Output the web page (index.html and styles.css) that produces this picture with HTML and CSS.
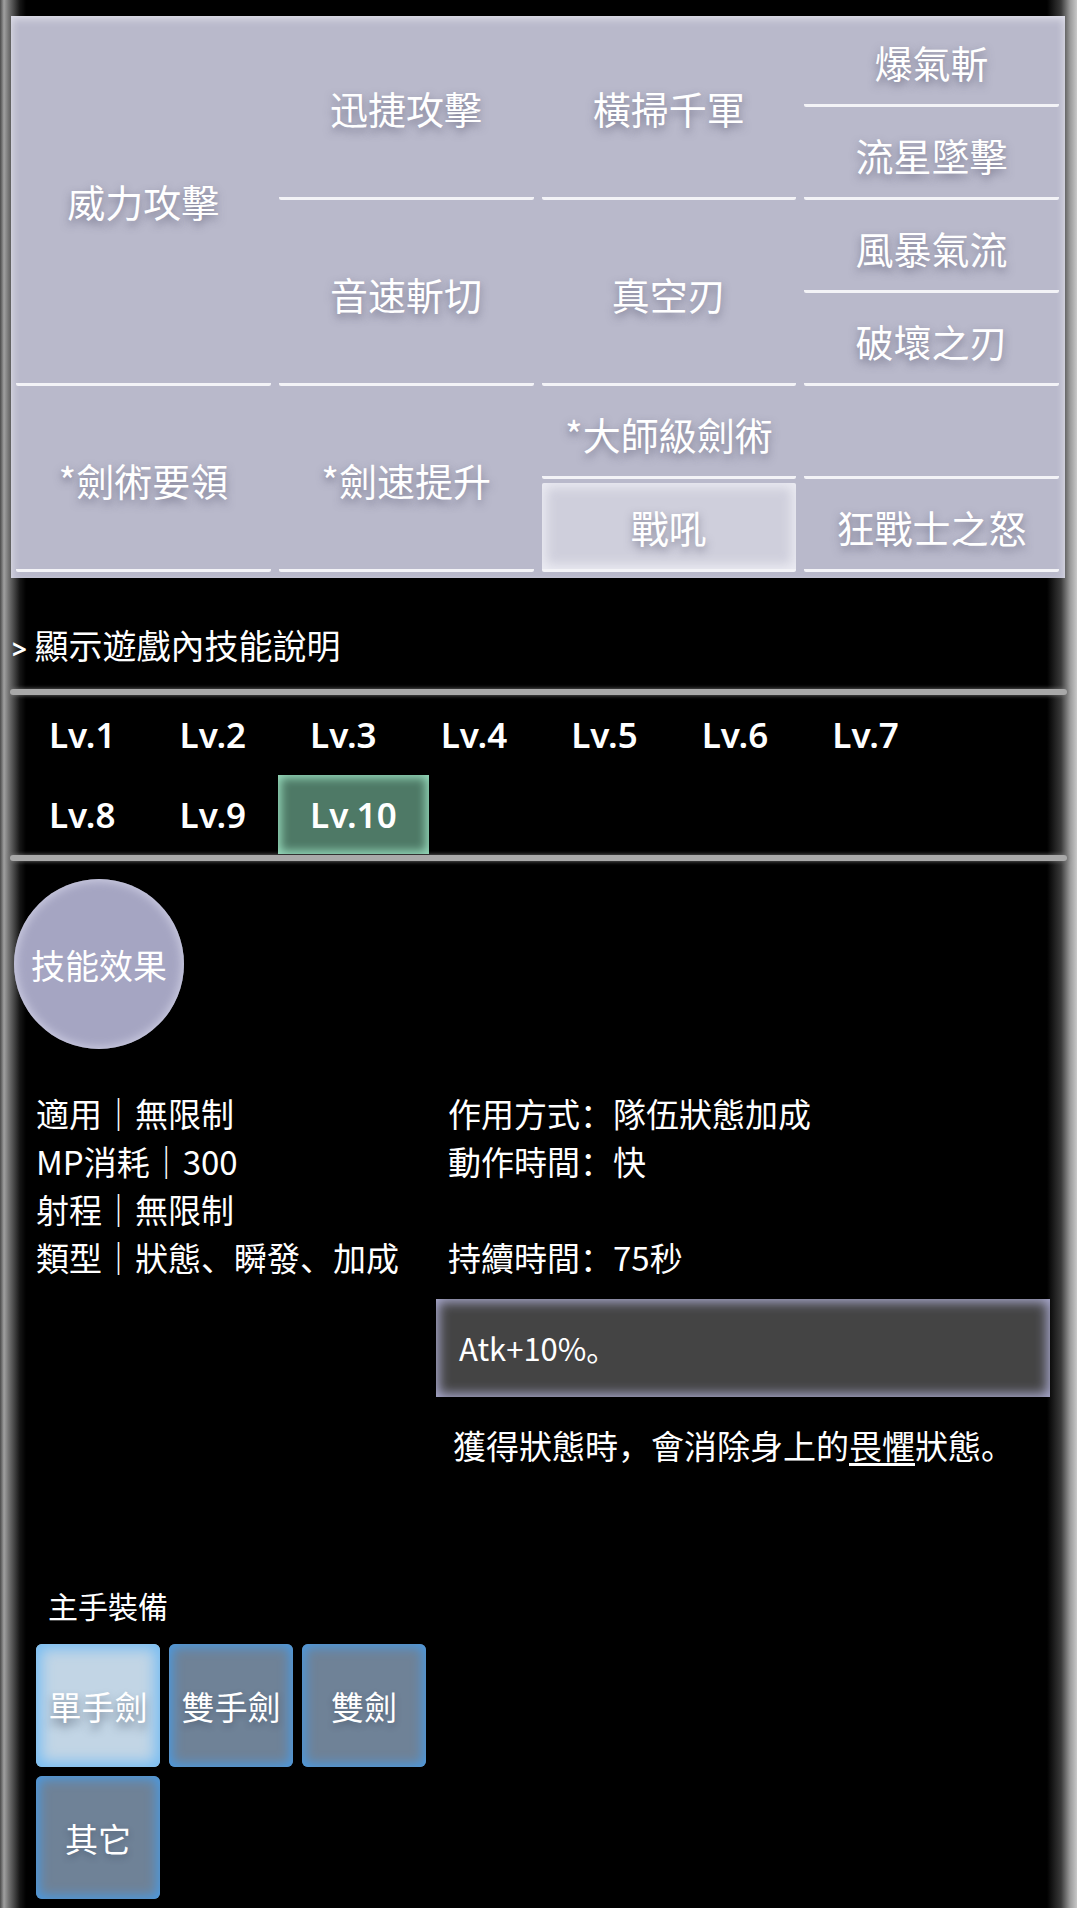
FILE: index.html
```html
<!DOCTYPE html>
<html lang="zh">
<head>
    <meta charset="UTF-8">
    <meta name="viewport" content="width=device-width, initial-scale=1.0">
    <title>戰吼</title>
    <link rel="stylesheet" href="styles.css">
</head>
<body>
    <div class="page">
        <!-- 技能樹 -->
        <div class="skill-tree">
            <div class="cell col1 rows-1-4">威力攻擊</div>
            <div class="cell col2 rows-1-2">迅捷攻擊</div>
            <div class="cell col3 rows-1-2">橫掃千軍</div>
            <div class="cell col4 row1">爆氣斬</div>
            <div class="cell col4 row2">流星墜擊</div>
            <div class="cell col2 rows-3-4">音速斬切</div>
            <div class="cell col3 rows-3-4">真空刃</div>
            <div class="cell col4 row3">風暴氣流</div>
            <div class="cell col4 row4">破壞之刃</div>
            <div class="cell col1 rows-5-6">*劍術要領</div>
            <div class="cell col2 rows-5-6">*劍速提升</div>
            <div class="cell col3 row5">*大師級劍術</div>
            <div class="cell col4 row5"></div>
            <div class="cell col3 row6 active">戰吼</div>
            <div class="cell col4 row6">狂戰士之怒</div>
        </div>

        <div class="toggle"><span class="caret">&gt;</span> 顯示遊戲內技能說明</div>

        <div class="divider"></div>

        <div class="levels">
            <span class="lv">Lv.1</span><span class="lv">Lv.2</span><span class="lv">Lv.3</span><span class="lv">Lv.4</span><span class="lv">Lv.5</span><span class="lv">Lv.6</span><span class="lv">Lv.7</span>
            <br>
            <span class="lv">Lv.8</span><span class="lv">Lv.9</span><span class="lv selected">Lv.10</span>
        </div>

        <div class="divider"></div>

        <div class="badge">技能效果</div>

        <div class="stats">
            <div class="stats-left">
                <p>適用｜無限制</p>
                <p>MP消耗｜300</p>
                <p>射程｜無限制</p>
                <p>類型｜狀態、瞬發、加成</p>
            </div>
            <div class="stats-right">
                <p>作用方式：隊伍狀態加成</p>
                <p>動作時間：快</p>
                <p>&nbsp;</p>
                <p>持續時間：75秒</p>
                <div class="effect-box">Atk+10%。</div>
                <p class="note">獲得狀態時，會消除身上的<u>畏懼</u>狀態。</p>
            </div>
        </div>

        <div class="equip">
            <div class="equip-title">主手裝備</div>
            <div class="equip-list">
                <div class="weapon selected">單手劍</div>
                <div class="weapon">雙手劍</div>
                <div class="weapon">雙劍</div>
                <div class="weapon">其它</div>
            </div>
        </div>
    </div>
</body>
</html>
```

FILE: styles.css
```css
body {
    margin: 0;
    background-color: #fff;
    font-family: "Noto Sans CJK SC", "Noto Sans", sans-serif;
    color: #fff;
}

p {
    margin: 0;
}

.page {
    width: 1077px;
    padding: 16px 0 9px 0;
    box-sizing: border-box;
    background: linear-gradient(to right, #4a4a4a 0, #a0a0a0 4px, #707070 9px, #151515 20px, #000 26px,
        #000 calc(100% - 30px), #3a3a3a calc(100% - 16px), #9a9a9a calc(100% - 7px), #c8c8c8 100%);
}

/* 技能樹 */
.skill-tree {
    margin: 0 12px 0 11px;
    padding: 2px 6px 6px 5px;
    background-color: #b9b9cb;
    box-shadow: inset 0 6px 10px -4px #e4e4ee, inset 6px 0 10px -6px #dedee8, inset -6px 0 10px -6px #dedee8;
    display: grid;
    grid-template-columns: repeat(4, 1fr);
    grid-template-rows: repeat(6, 89px);
    column-gap: 8px;
    row-gap: 4px;
}

.cell {
    display: flex;
    align-items: center;
    justify-content: center;
    border-bottom: 3px solid #f3f3f7;
    border-radius: 2px;
    font-size: 38px;
    text-shadow: 0 4px 8px rgba(70, 70, 95, 0.55);
}

.col1 { grid-column: 1; }
.col2 { grid-column: 2; }
.col3 { grid-column: 3; }
.col4 { grid-column: 4; }
.row1 { grid-row: 1; }
.row2 { grid-row: 2; }
.row3 { grid-row: 3; }
.row4 { grid-row: 4; }
.row5 { grid-row: 5; }
.row6 { grid-row: 6; }
.rows-1-2 { grid-row: 1 / 3; }
.rows-3-4 { grid-row: 3 / 5; }
.rows-1-4 { grid-row: 1 / 5; }
.rows-5-6 { grid-row: 5 / 7; }

.cell.active {
    background-color: #cfcfdc;
    box-shadow: inset 0 0 12px 4px #ececf3;
}

.toggle {
    padding: 43px 0 16px 12px;
    font-size: 34px;
    line-height: 48px;
}

.caret {
    font-family: "Noto Sans", sans-serif;
    font-weight: bold;
    font-size: 26px;
}

.divider {
    height: 6px;
    margin: 0 10px;
    border-radius: 3px;
    background-color: #a9a9a9;
    box-shadow: 0 0 4px #777;
}

/* 等級 */
.levels {
    padding-left: 17px;
}

.lv {
    display: inline-block;
    padding: 0 32px;
    height: 80px;
    line-height: 80px;
    font-family: "Noto Sans", sans-serif;
    font-weight: 600;
    font-size: 35px;
}

.lv.selected {
    height: 79px;
    background-color: #4e7966;
    box-shadow: inset 0 0 10px 3px #96dabb;
}

/* 技能效果 */
.badge {
    width: 170px;
    height: 170px;
    margin: 18px 0 0 14px;
    border-radius: 50%;
    background-color: #a5a5c2;
    box-shadow: inset 0 0 10px 2px #cdcde2;
    display: flex;
    align-items: center;
    justify-content: center;
    font-size: 34px;
}

.stats {
    display: grid;
    grid-template-columns: 400px 614px;
    margin: 40px 0 0 36px;
    font-size: 33px;
    line-height: 48px;
}

.stats-right p {
    padding-left: 12px;
}

.effect-box {
    margin-top: 18px;
    height: 98px;
    padding-left: 23px;
    display: flex;
    align-items: center;
    background-color: #444;
    box-shadow: inset 0 0 12px 3px #aaaacf;
    font-size: 31px;
}

.stats-right .note {
    margin-top: 24px;
    padding-left: 17px;
}

.note u {
    text-underline-offset: 4px;
}

/* 裝備 */
.equip {
    margin: 112px 0 0 36px;
}

.equip-title {
    padding-left: 12px;
    font-size: 30px;
    line-height: 48px;
}

.equip-list {
    margin-top: 15px;
    width: 400px;
    display: flex;
    flex-wrap: wrap;
    gap: 9px;
}

.weapon {
    width: 124px;
    height: 123px;
    border-radius: 6px;
    background-color: #6f8297;
    box-shadow: inset 0 0 12px 3px #4a9ae2;
    display: flex;
    align-items: center;
    justify-content: center;
    font-size: 33px;
    text-shadow: 0 3px 6px rgba(40, 50, 70, 0.35);
}

.weapon.selected {
    background-color: #c2d5e5;
    box-shadow: inset 0 0 14px 5px #78bdf2;
    text-shadow: 0 6px 8px rgba(40, 50, 70, 0.5);
}
```
